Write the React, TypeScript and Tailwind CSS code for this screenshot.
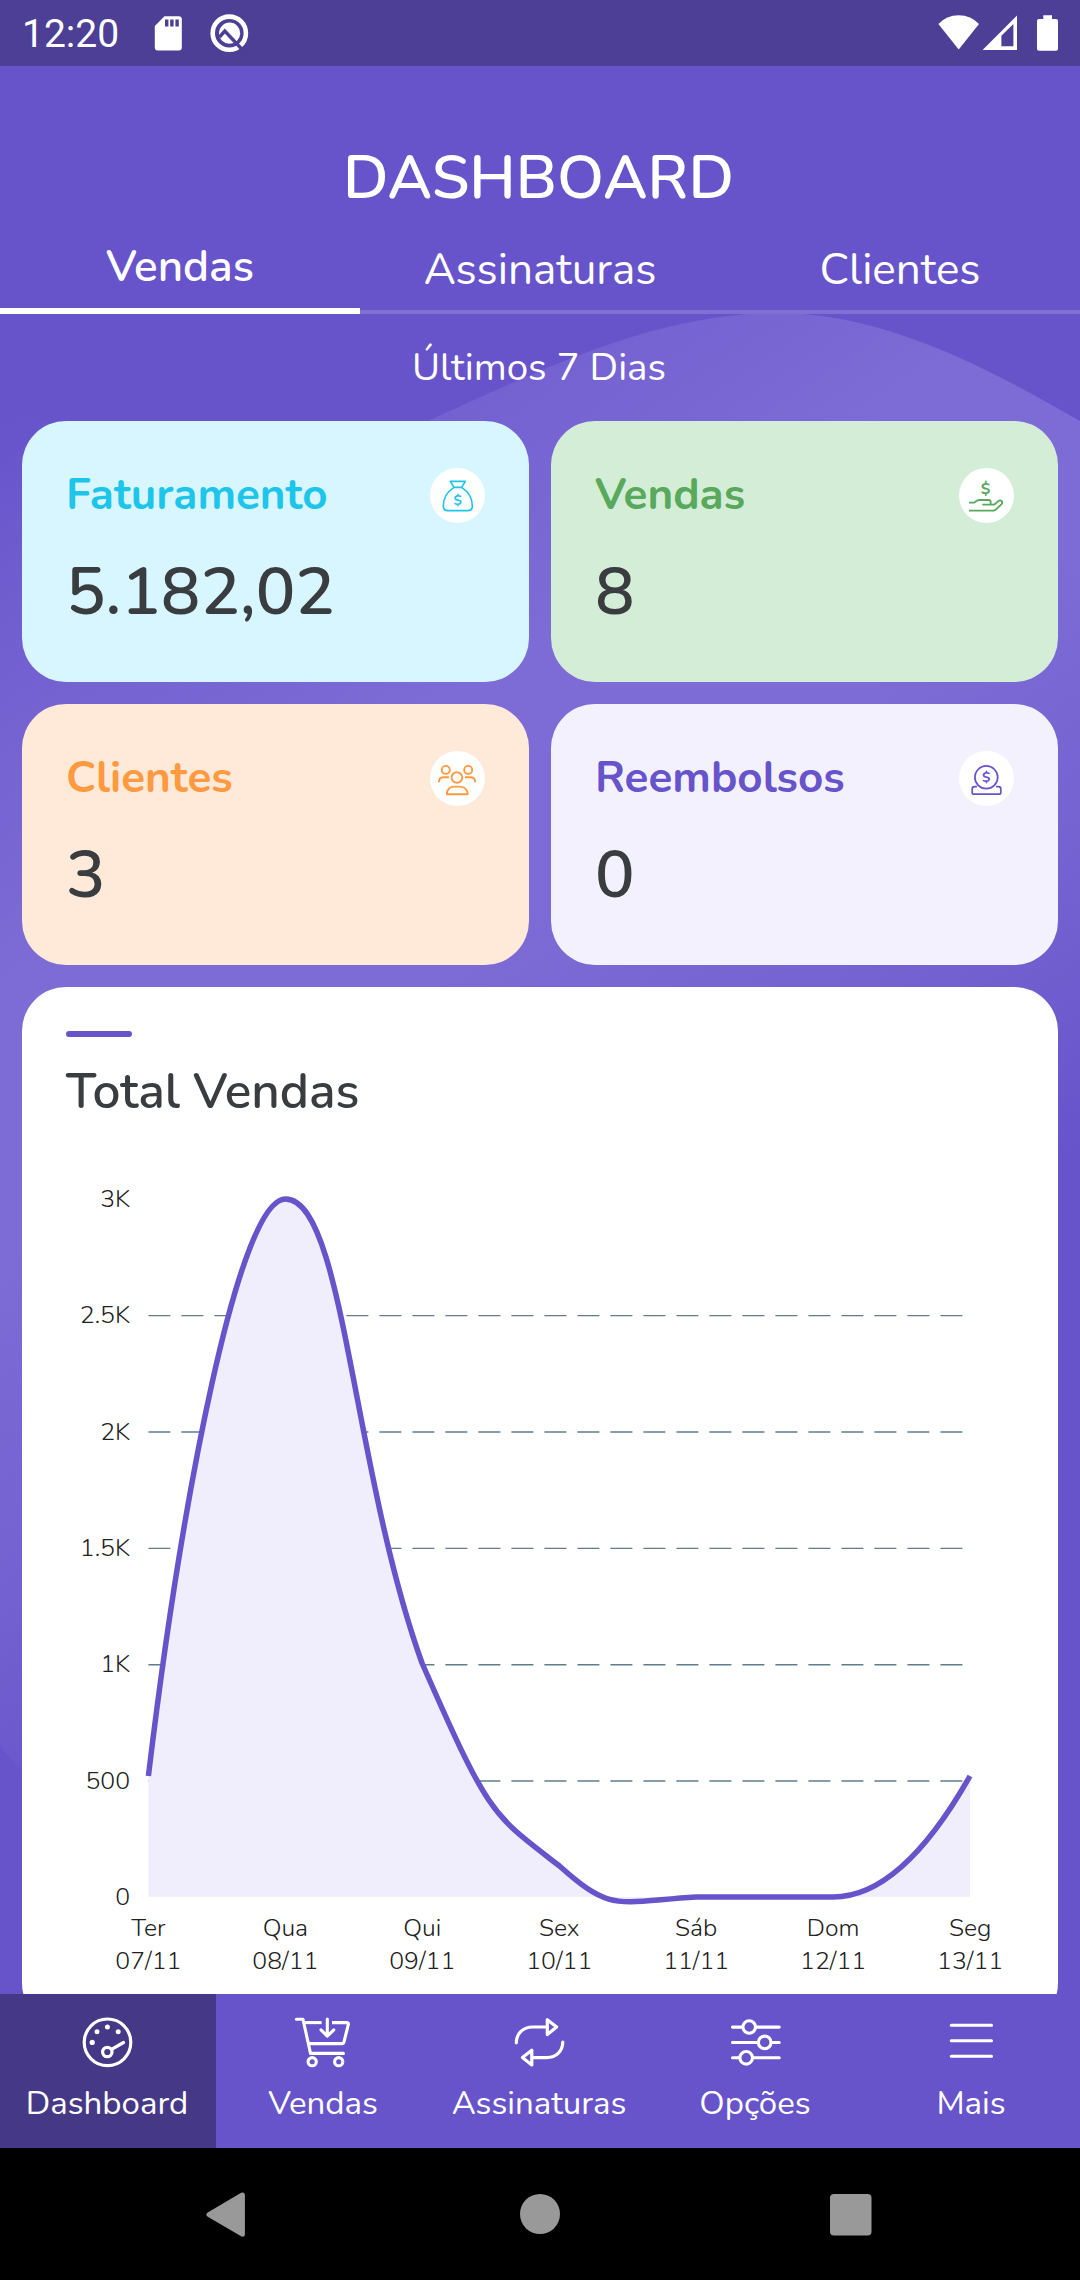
import { useState } from 'react';
import type { ReactNode } from 'react';

interface StatCard {
  title: string;
  value: string;
  cardClass: string;
  titleClass: string;
  icon: ReactNode;
}

interface NavItem {
  label: string;
  icon: ReactNode;
}

const tabs = ['Vendas', 'Assinaturas', 'Clientes'];

const cards: StatCard[] = [
  {
    title: 'Faturamento',
    value: '5.182,02',
    cardClass: 'bg-[#d7f6ff]',
    titleClass: 'text-[#1ec5ea]',
    icon: <MoneyBagIcon />,
  },
  {
    title: 'Vendas',
    value: '8',
    cardClass: 'bg-[#d4edd6]',
    titleClass: 'text-[#58a95c]',
    icon: <HandMoneyIcon />,
  },
  {
    title: 'Clientes',
    value: '3',
    cardClass: 'bg-[#ffe9d9]',
    titleClass: 'text-[#ff9a40]',
    icon: <PeopleIcon />,
  },
  {
    title: 'Reembolsos',
    value: '0',
    cardClass: 'bg-[#f4f1ff]',
    titleClass: 'text-[#6754cb]',
    icon: <RefundIcon />,
  },
];

const navItems: NavItem[] = [
  { label: 'Dashboard', icon: <GaugeIcon /> },
  { label: 'Vendas', icon: <CartIcon /> },
  { label: 'Assinaturas', icon: <RepeatIcon /> },
  { label: 'Opções', icon: <SlidersIcon /> },
  { label: 'Mais', icon: <MenuIcon /> },
];

const yLabels = ['3K', '2.5K', '2K', '1.5K', '1K', '500', '0'];

const days = [
  { day: 'Ter', date: '07/11' },
  { day: 'Qua', date: '08/11' },
  { day: 'Qui', date: '09/11' },
  { day: 'Sex', date: '10/11' },
  { day: 'Sáb', date: '11/11' },
  { day: 'Dom', date: '12/11' },
  { day: 'Seg', date: '13/11' },
];

function MoneyBagIcon() {
  return (
    <svg viewBox="15 23 165 165" className="size-full" fill="none" stroke="currentColor" strokeWidth="5" strokeLinejoin="round">
      <path d="M76 63H121L110 81H87Z" />
      <path d="M87 81C70 92 55 112 55 137Q55 151 68 151H129Q142 151 142 137C142 112 127 92 110 81" />
      <text x="98" y="133" textAnchor="middle" fontSize="42" fontWeight="700" fill="currentColor" stroke="none">$</text>
    </svg>
  );
}

function HandMoneyIcon() {
  return (
    <svg viewBox="12 22 165 165" className="size-full" fill="none" stroke="currentColor" strokeWidth="5.5" strokeLinejoin="round">
      <text x="92" y="100" textAnchor="middle" fontSize="48" fontWeight="700" fill="currentColor" stroke="none">$</text>
      <path d="M42 126H57L68 119Q70 118 73 118H100Q107 118 107 124V132" />
      <path d="M82 132H115Q118 132 120 130L129 122Q136 117 140 121Q144 126 139 131L122 147Q119 150 115 150H42" />
    </svg>
  );
}

function PeopleIcon() {
  return (
    <svg viewBox="0 0 55 55" className="size-full" fill="none" stroke="currentColor" strokeWidth="1.9" strokeLinejoin="round">
      <circle cx="15.8" cy="18.9" r="4" />
      <circle cx="38.2" cy="18.9" r="4" />
      <circle cx="26.9" cy="26.5" r="5.3" />
      <path d="M9 31.3V30Q9.3 26.2 13.5 26.2H19" />
      <path d="M35 26.2H40.5Q44.8 26.2 45.1 30V31.3" />
      <path d="M16.9 43.3V41.8Q18.2 35.6 24.6 35.6H29.4Q36 35.6 37.6 41.8V43.3Z" />
    </svg>
  );
}

function RefundIcon() {
  return (
    <svg viewBox="0 0 55 55" className="size-full" fill="none" stroke="currentColor" strokeWidth="1.7" strokeLinecap="round">
      <circle cx="27.3" cy="26.3" r="11.4" />
      <path d="M17.3 35.6H15.4Q13.2 35.6 13.2 38V41.4Q13.2 43.2 15 43.2H40Q41.8 43.2 41.8 41.4V38Q41.8 35.6 39.6 35.6H37.7" />
      <text x="27.3" y="31.2" textAnchor="middle" fontSize="14" fontWeight="700" fill="currentColor" stroke="none">$</text>
    </svg>
  );
}

function GaugeIcon() {
  return (
    <svg viewBox="0 0 55 55" className="size-[55px]" fill="none" stroke="currentColor" strokeWidth="3.2" strokeLinecap="round">
      <circle cx="27.5" cy="27.3" r="23.3" />
      <circle cx="27.3" cy="37" r="4.7" />
      <path d="M31.6 34.3L43.5 27.5" />
      <g fill="currentColor" stroke="none">
        <circle cx="27.4" cy="12" r="2.5" />
        <circle cx="17" cy="16.8" r="2.5" />
        <circle cx="38.2" cy="16.8" r="2.5" />
        <circle cx="12.2" cy="27.4" r="2.6" />
      </g>
    </svg>
  );
}

function CartIcon() {
  return (
    <svg viewBox="0 0 55 55" className="size-[55px] overflow-visible" fill="none" stroke="currentColor" strokeWidth="3.1" strokeLinecap="round" strokeLinejoin="round">
      <path d="M0.4 4.3H7L14.5 38.4H47.4" />
      <path d="M8.4 7.6H25.6" strokeLinecap="butt" />
      <path d="M36 7.6H50.6Q52.8 7.6 52.3 9.6L48 26.8Q47.6 28.6 46 28.6H12.8" strokeLinecap="butt" />
      <path d="M31.3 4V21M25 14.8L31.3 21.2L37.8 14.8" />
      <circle cx="16.2" cy="46.7" r="4.1" />
      <circle cx="42.7" cy="46.7" r="4.1" />
    </svg>
  );
}

function RepeatIcon() {
  return (
    <svg viewBox="0 0 55 55" className="size-[55px]" fill="none" stroke="currentColor" strokeWidth="3.2" strokeLinecap="round" strokeLinejoin="round">
      <path d="M4.3 27.8C4.5 18.5 11 12 20.8 12H34.8" />
      <path d="M35.3 4.8V19.6L44.6 12Z" />
      <path d="M50.8 27C50.6 36 44.5 42.6 34.8 42.6H20.4" />
      <path d="M19.8 35.2V50L10.4 42.6Z" />
    </svg>
  );
}

function SlidersIcon() {
  return (
    <svg viewBox="0 0 55 55" className="size-[55px]" fill="none" stroke="currentColor" strokeWidth="3.1" strokeLinecap="round">
      <path d="M4.5 12.1H51.2M4.5 27.5H51.2M4.5 42.8H51.2" />
      <g fill="#6754cb">
        <circle cx="21.2" cy="12" r="6.3" />
        <circle cx="36.7" cy="27.4" r="6.3" />
        <circle cx="18.2" cy="42.8" r="6.3" />
      </g>
    </svg>
  );
}

function MenuIcon() {
  return (
    <svg viewBox="0 0 55 55" className="size-[55px]" fill="none" stroke="currentColor" strokeWidth="3.1" strokeLinecap="round">
      <path d="M7.3 10.3H47.5M7.3 25.8H47.5M7.3 41.3H47.5" />
    </svg>
  );
}

function StatusBar() {
  return (
    <div className="flex h-[66px] items-center justify-between bg-[#4c3f95] px-[22px]">
      <div className="flex items-center">
        <span className="w-[132px] pt-0.5 font-['Roboto',sans-serif] text-[39px] leading-none">12:20</span>
        <svg viewBox="154 0 96 66" className="h-[66px] w-24">
          {/* sd card */}
          <path d="M164.5 16.2H178.8Q181.8 16.2 181.8 19.2V47.6Q181.8 50.6 178.8 50.6H157.8Q154.8 50.6 154.8 47.6V26Z" fill="#fff" />
          <path d="M166.7 19.6V26.6M171.9 19.6V26.6M177.1 19.6V26.6" stroke="#4c3f95" strokeWidth="3.4" />
          {/* search badge */}
          <circle cx="229.3" cy="33.2" r="16.6" fill="none" stroke="#fff" strokeWidth="4.6" />
          <circle cx="229.6" cy="33.2" r="10.6" fill="#fff" />
          <path d="M219.5 37L224.8 31L245 52.5" fill="none" stroke="#4c3f95" strokeWidth="3.4" />
        </svg>
      </div>
      <svg viewBox="938 0 120 66" className="h-[66px] w-[120px]" fill="#fff">
        <path d="M938.4 24Q946.5 15.2 958.7 15.2T979 24L958.7 49.4Z" />
        <path d="M1017 15.6V50H982.6Z" />
        <path d="M1001.4 35.8V46.3H1013.4V24Z" fill="#4c3f95" />
        <path d="M1043.3 15.2H1052V19H1056Q1058 19 1058 21V48.8Q1058 50.8 1056 50.8H1039Q1037 50.8 1037 48.8V21Q1037 19 1039 19H1043.3Z" />
      </svg>
    </div>
  );
}

// lighter wave behind the cards
function Wave() {
  return (
    <svg viewBox="0 0 1080 2280" className="absolute inset-0 h-full w-full">
      <defs>
        <linearGradient id="wave" gradientUnits="userSpaceOnUse" x1="0" y1="430" x2="657" y2="1422">
          <stop offset="0" stopColor="#7d6cd5" stopOpacity="0" />
          <stop offset="0.12" stopColor="#7d6cd5" stopOpacity="0.4" />
          <stop offset="0.4" stopColor="#7d6cd5" />
          <stop offset="0.58" stopColor="#7d6cd5" />
          <stop offset="0.84" stopColor="#7d6cd5" stopOpacity="0.5" />
          <stop offset="1" stopColor="#7d6cd5" stopOpacity="0" />
        </linearGradient>
      </defs>
      <path
        d="M0 422H426C540 370 655 313 777 313C880 313 980 363 1080 421V1600L400 2200L22 1771L0 1747Z"
        fill="url(#wave)"
      />
    </svg>
  );
}

function SalesChart() {
  const curve =
    'M148.4 1776C182 1497 239 1199 285.4 1199C344 1199 352 1468 422 1663C490 1818 492 1814 559.5 1866C612 1913 616 1902 696 1897H833Q901.5 1897 970 1776';

  return (
    <svg viewBox="66 1125 948 870" className="h-[870px] w-[948px] font-light" fontSize="24.75" fill="#212121">
      {yLabels.map((label, i) => (
        <g key={label}>
          {i > 0 && i < 6 && (
            <path
              d={`M148.4 ${1199.3 + i * 116.35}H970`}
              stroke="#607d8b"
              strokeWidth="1.4"
              strokeDasharray="22 11"
            />
          )}
          <text x="130" y={1207 + i * 116.35} textAnchor="end">{label}</text>
        </g>
      ))}
      <path d={`${curve}V1897H148.4Z`} fill="#f0edfc" />
      <path d={curve} fill="none" stroke="#6754cb" strokeWidth="5.5" />
      {days.map((d, i) => (
        <g key={d.date} textAnchor="middle">
          <text x={148.4 + i * 136.95} y="1936">{d.day}</text>
          <text x={148.4 + i * 136.95} y="1969">{d.date}</text>
        </g>
      ))}
    </svg>
  );
}

export default function App() {
  const [activeTab, setActiveTab] = useState('Vendas');
  const [activeNav, setActiveNav] = useState('Dashboard');

  return (
    <div className="relative flex h-[2280px] w-[1080px] flex-col overflow-hidden bg-[#6754cb] font-['Nunito','Lato',sans-serif] text-white">
      <Wave />

      <div className="relative flex min-h-0 flex-1 flex-col">
        <StatusBar />

        <header className="bg-[#6754cb] pt-[71px]">
          <h1 className="pr-[3px] text-center text-[60.5px] leading-[83px] font-semibold">DASHBOARD</h1>
          <div className="flex">
            {tabs.map((tab) => (
              <button
                key={tab}
                onClick={() => setActiveTab(tab)}
                className={
                  tab === activeTab
                    ? 'flex h-[94px] flex-1 items-end justify-center border-b-[6px] border-white pb-[11px] text-[44px] leading-[60px] font-semibold'
                    : 'flex h-[94px] flex-1 items-end justify-center border-b-4 border-[#8070d4] pb-[10px] text-[44px] leading-[60px]'
                }
              >
                {tab}
              </button>
            ))}
          </div>
        </header>

        <main className="flex min-h-0 flex-1 flex-col overflow-hidden px-[22px] pt-7">
          <p className="pr-0.5 text-center text-[38.5px] leading-[52px]">Últimos 7 Dias</p>

          <div className="mt-[27px] grid grid-cols-2 gap-[22px]">
            {cards.map((card) => (
              <div key={card.title} className={`h-[261px] rounded-[44px] p-11 ${card.cardClass}`}>
                <div className={`flex items-center justify-between ${card.titleClass}`}>
                  <h2 className="text-[44px] leading-[60px] font-bold">{card.title}</h2>
                  <div className="size-[55px] rounded-full bg-white">{card.icon}</div>
                </div>
                <p className="mt-[22px] text-[66px] leading-[90px] font-semibold text-[#3a3d40]">{card.value}</p>
              </div>
            ))}
          </div>

          <section className="mt-[22px] h-[1040px] shrink-0 rounded-[44px] bg-white px-11 pt-11">
            <div className="h-1.5 w-[66px] rounded-full bg-[#6754cb]" />
            <h2 className="mt-[21px] mb-[-1px] text-[49.5px] leading-[68px] font-semibold text-[#3a3d40]">Total Vendas</h2>
            <SalesChart />
          </section>
        </main>
      </div>

      <nav className="relative flex h-[154px] bg-[#6754cb]">
        {navItems.map((item) => (
          <button
            key={item.label}
            onClick={() => setActiveNav(item.label)}
            className={`flex flex-1 basis-0 flex-col items-center pt-[21px] pr-0.5 ${item.label === activeNav ? 'bg-[#453887]' : ''}`}
          >
            {item.icon}
            <span className="mt-[11px] text-[33px] leading-[45px]">{item.label}</span>
          </button>
        ))}
      </nav>

      <div className="relative h-[132px] bg-black">
        <svg viewBox="0 0 1080 132" className="h-full w-full" fill="#999" stroke="#999" strokeLinejoin="round">
          <path d="M209 66.6L242.4 47V86.2Z" strokeWidth="5" />
          <circle cx="540" cy="66" r="20" stroke="none" />
          <rect x="830" y="46" width="41.5" height="41.5" rx="4" stroke="none" />
        </svg>
      </div>
    </div>
  );
}
